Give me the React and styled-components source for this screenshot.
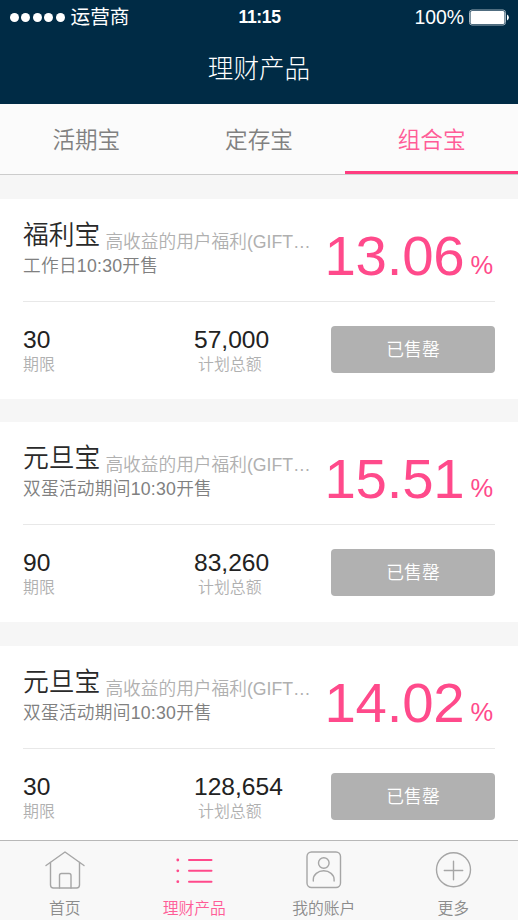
import React from "react";
import styled, { createGlobalStyle } from "styled-components";

const GlobalStyle = createGlobalStyle`
  * {
    box-sizing: border-box;
  }
  body {
    margin: 0;
    overflow: hidden;
    font-family: "Liberation Sans", "Noto Sans CJK SC", sans-serif;
    font-weight: 350;
  }
`;

const Page = styled.div`
  width: 518px;
  height: 920px;
  display: flex;
  flex-direction: column;
  background-color: #f6f6f6;
  overflow: hidden;
`;

const Header = styled.header`
  height: 103.5px;
  flex-shrink: 0;
  background-color: #002b45;
  color: white;
`;

const StatusBar = styled.div`
  height: 34px;
  padding: 0 9px 0 10px;
  display: grid;
  grid-template-columns: 1fr auto 1fr;
  align-items: center;
  line-height: 34px;
`;

const Carrier = styled.div`
  display: flex;
  align-items: center;
  font-size: 19.6px;
  font-weight: 400;
`;

const Dots = styled.div`
  display: flex;
  gap: 2.4px;
  margin-right: 6px;
`;

const Dot = styled.span`
  width: 9px;
  height: 9px;
  border-radius: 50%;
  background-color: white;
`;

const Time = styled.div`
  font-size: 17.6px;
  font-weight: bold;
  letter-spacing: -0.4px;
`;

const Power = styled.div`
  display: flex;
  align-items: center;
  justify-content: flex-end;
  gap: 5px;
  font-size: 19.4px;
`;

const Title = styled.h1`
  margin: 0;
  height: 69px;
  line-height: 70px;
  font-size: 25.6px;
  font-weight: 300;
  text-align: center;
`;

const Tabs = styled.nav`
  height: 71.5px;
  flex-shrink: 0;
  display: flex;
  background-color: #fbfbfb;
  border-bottom: 1px solid #cccccc;
`;

const Tab = styled.div`
  flex: 1;
  height: 70.5px;
  line-height: 73px;
  font-size: 22.6px;
  text-align: center;
  color: ${(props) => (props.$active ? "#ff5c97" : "#808080")};
  border-bottom: ${(props) => (props.$active ? "3px solid #ff3d80" : "none")};
`;

const List = styled.main`
  flex: 1;
  min-height: 0;
  padding-top: 24px;
  display: flex;
  flex-direction: column;
  gap: 23.6px;
  overflow: hidden;
`;

const Card = styled.section`
  height: 199.8px;
  flex-shrink: 0;
  padding: 0 23px;
  background-color: white;
`;

const CardTop = styled.div`
  height: 103px;
  display: flex;
  justify-content: space-between;
  border-bottom: 1px solid #e8e8e8;
`;

const Info = styled.div`
  padding-top: 18px;
`;

const NameRow = styled.div`
  height: 37px;
  line-height: 36px;
  display: flex;
  white-space: nowrap;
`;

const Name = styled.span`
  font-size: 25.8px;
  color: #2a2a2a;
`;

const Desc = styled.span`
  padding-top: 7px;
  margin-left: 5px;
  font-size: 17.7px;
  color: #b0b0b0;
`;

const Note = styled.div`
  line-height: 25px;
  font-size: 17.7px;
  letter-spacing: 0.25px;
  color: #808080;
`;

const Rate = styled.div`
  display: flex;
  align-items: baseline;
  line-height: 113px;
  font-size: 56.4px;
  letter-spacing: -0.2px;
  color: #ff4a8b;
`;

const Percent = styled.span`
  margin: 0 2px 0 6px;
  font-size: 25.5px;
  line-height: 1;
  position: relative;
  top: -1px;
`;

const CardBottom = styled.div`
  height: 96px;
  display: grid;
  grid-template-columns: 171px 1fr 164px;
  align-items: start;
`;

const Stat = styled.div`
  padding-top: 24px;
`;

const Value = styled.div`
  line-height: 28px;
  font-size: 24.6px;
  color: #222222;
`;

const Label = styled.div`
  padding-left: ${(props) => (props.$indent ? "4px" : "0")};
  line-height: 22px;
  font-size: 15.9px;
  color: #b0b0b0;
`;

const Button = styled.button`
  margin-top: 24px;
  height: 47px;
  padding: 1px 0 0;
  border: none;
  border-radius: 4px;
  background-color: #b1b1b1;
  color: white;
  font-family: inherit;
  font-size: 17.8px;
  font-weight: 350;
  line-height: 47px;
`;

const BottomBar = styled.footer`
  height: 80px;
  flex-shrink: 0;
  display: grid;
  grid-template-columns: repeat(4, 1fr);
  background-color: #f8f8f8;
  border-top: 1px solid #b8b8b8;
`;

const BarItem = styled.div`
  display: flex;
  flex-direction: column;
  align-items: center;
  padding-top: 8px;
  font-size: 15.8px;
  line-height: 22px;
  color: ${(props) => (props.$active ? "#ff5c97" : "#8c8c8c")};

  svg {
    display: block;
    margin-bottom: 7px;
    flex-shrink: 0;
    fill: none;
    stroke: ${(props) => (props.$active ? "#ff4a8b" : "#a6a6a6")};
    stroke-width: 1.4;
    stroke-linecap: round;
    stroke-linejoin: round;
  }
`;

const ListLines = styled.path`
  stroke-width: 2;
`;

const ListDots = styled.path`
  stroke-width: 2.8;
`;

const HomeIcon = () => (
    <svg width="42" height="42" viewBox="0 0 42 42">
        <path d="M2 16.5 21 3l19 13.5" />
        <path d="M6.5 13.5V36a3 3 0 0 0 3 3h23a3 3 0 0 0 3-3V13.5" />
        <path d="M15.5 39V26.5a2 2 0 0 1 2-2h7.5a2 2 0 0 1 2 2V39" />
    </svg>
);

const ListIcon = () => (
    <svg width="42" height="42" viewBox="0 0 42 42">
        <ListLines d="M16 11h22.5M16 21.8h22.5M16 32.7h22.5" />
        <ListDots d="M4.8 11h.01M4.8 21.8h.01M4.8 32.7h.01" />
    </svg>
);

const AccountIcon = () => (
    <svg width="42" height="42" viewBox="0 0 42 42">
        <rect x="4" y="3" width="33.5" height="35.5" rx="4.5" />
        <circle cx="20.8" cy="14" r="5.3" />
        <path d="M10.3 32v-1.500a10.4 8.7 0 0 1 20.8 0V32" />
    </svg>
);

const MoreIcon = () => (
    <svg width="42" height="42" viewBox="0 0 42 42">
        <circle cx="21.5" cy="20.8" r="17" />
        <path d="M21.5 12.2v18.6M12.3 21.5h18.4" />
    </svg>
);

const Battery = () => (
    <svg width="40" height="17" viewBox="0 0 40 17">
        <rect x="0.5" y="1" width="36" height="15" rx="2.5" fill="none" stroke="#9fb0bb" />
        <rect x="1.5" y="2" width="34" height="13" rx="1.5" fill="white" />
        <path d="M38 5.5a3.3 3.3 0 0 1 0 6z" fill="white" />
    </svg>
);

const products = [
    { name: "福利宝", note: "工作日10:30开售", rate: "13.06", term: "30", total: "57,000" },
    { name: "元旦宝", note: "双蛋活动期间10:30开售", rate: "15.51", term: "90", total: "83,260" },
    { name: "元旦宝", note: "双蛋活动期间10:30开售", rate: "14.02", term: "30", total: "128,654" },
];

const Product = ({ item }) => {
    return (
        <Card>
            <CardTop>
                <Info>
                    <NameRow>
                        <Name>{item.name}</Name>
                        <Desc>高收益的用户福利(GIFT…</Desc>
                    </NameRow>
                    <Note>{item.note}</Note>
                </Info>
                <Rate>
                    {item.rate}
                    <Percent>%</Percent>
                </Rate>
            </CardTop>
            <CardBottom>
                <Stat>
                    <Value>{item.term}</Value>
                    <Label>期限</Label>
                </Stat>
                <Stat>
                    <Value>{item.total}</Value>
                    <Label $indent>计划总额</Label>
                </Stat>
                <Button>已售罄</Button>
            </CardBottom>
        </Card>
    );
};

const App = () => {
    return (
        <Page>
            <GlobalStyle />
            <Header>
                <StatusBar>
                    <Carrier>
                        <Dots>
                            <Dot />
                            <Dot />
                            <Dot />
                            <Dot />
                            <Dot />
                        </Dots>
                        运营商
                    </Carrier>
                    <Time>11:15</Time>
                    <Power>
                        100%
                        <Battery />
                    </Power>
                </StatusBar>
                <Title>理财产品</Title>
            </Header>
            <Tabs>
                <Tab>活期宝</Tab>
                <Tab>定存宝</Tab>
                <Tab $active>组合宝</Tab>
            </Tabs>
            <List>
                {products.map((item, index) => (
                    <Product item={item} key={index} />
                ))}
            </List>
            <BottomBar>
                <BarItem>
                    <HomeIcon />
                    首页
                </BarItem>
                <BarItem $active>
                    <ListIcon />
                    理财产品
                </BarItem>
                <BarItem>
                    <AccountIcon />
                    我的账户
                </BarItem>
                <BarItem>
                    <MoreIcon />
                    更多
                </BarItem>
            </BottomBar>
        </Page>
    );
};

export default App;
